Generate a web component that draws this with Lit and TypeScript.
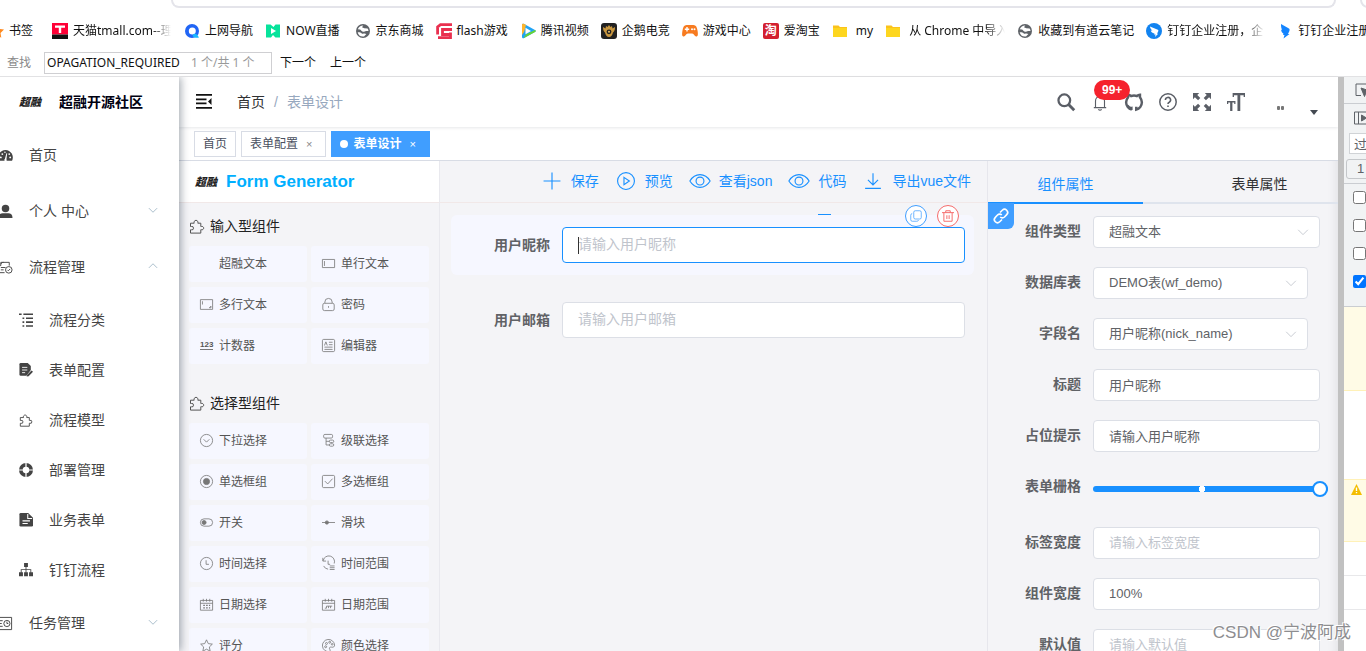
import { LitElement, html, svg, css, nothing, TemplateResult } from "lit";
import { customElement, property, state } from "lit/decorators.js";
import { classMap } from "lit/directives/class-map.js";

const solid = (body: TemplateResult, box = "0 0 16 16") =>
  html`<svg class="ico solid" viewBox=${box} aria-hidden="true">${body}</svg>`;
const line = (body: TemplateResult, box = "0 0 16 16") =>
  html`<svg class="ico line" viewBox=${box} aria-hidden="true">${body}</svg>`;

const puzzle = svg`<path d="M1.500 5.200h3.700a2 2 0 1 1 3.600 0h3v3.300h.6a1.700 1.700 0 1 1 0 3.200h-.6v3.400H1.500v-3.300h.9a1.700 1.700 0 1 0 0-3.300h-.9z"/>`;

const globe = solid(svg`
  <circle cx="8" cy="8" r="7" fill="#5f6368"/>
  <path fill="#fff" d="M2.800 6.300C3.600 3.800 5.700 2.500 8.300 2.500L7 4.300l2.300.9 3.300.4c.6.8.9 1.600.9 2.400H11c-1.200.7-2.400 1-3.600.5C6.300 8 6 6.800 4.800 6.500zM2.700 9.200c1.600-.2 3 .1 3.800 1 .8.800 1.900.6 2.900.4l2 .300-2.400 2.500C5.800 14 3.200 12.200 2.700 9.200z"/>`);
const folder = solid(svg`<path fill="#fbc21c" d="M1 2.500h5.500L8 4h7v3H1z"/><path fill="#fdd61f" d="M1 5h14v9H1z"/>`);

interface Bookmark { icon: TemplateResult; text: string; cls?: string; }
const BOOKMARKS: Bookmark[] = [
  { icon: solid(svg`<path fill="#ff0036" d="M0 0h16v11.500H0z"/><path fill="#111" d="M0 11.500h16V16H0z"/><path fill="#fff" d="M3 2.600h10v2.200H9.200V10H6.800V4.800H3z"/>`), text: "天猫tmall.com--理", cls: "fade" },
  { icon: solid(svg`<circle cx="8" cy="8" r="7" fill="#2165f5"/><circle cx="8.300" cy="8" r="3.500" fill="#fff"/><path fill="#19b8ff" d="M9.500 11c2-.8 3.300-.4 5.500 3.500-2.600.8-5 .2-6.500-1.500z"/>`), text: "上网导航" },
  { icon: solid(svg`<path fill="#07e39b" d="M1 1.500h4.500l3 2.500 2-2.500H15v13h-4.500L8 12l-2 2.500H1z"/><path fill="#fff" d="M6 5l5 3-5 3z"/>`), text: "NOW直播", cls: "wide" },
  { icon: globe, text: "京东商城" },
  { icon: solid(svg`<path fill="none" stroke="#e9304f" stroke-width="2.800" d="M16 1.600H4.500L1.600 4v7.500M16 6.500H6.500v5h8v-2M2 14.600h12.500v-4"/>`), text: "flash游戏" },
  { icon: solid(svg`<path fill="#20a4f5" d="M2 2.200C2 .8 3 .5 4.200 1L15 7c1 .6 1 1.400 0 2L4.200 15C3 15.600 2 15.200 2 13.800z"/><path fill="#ffb52b" d="M2 2.200C2 .8 3 .5 4.200 1L6 2 4 9l-2 3z"/><path fill="#6bd52e" d="M3.500 15.200L15 9c1-.6 1-1.400 0-2L6 11.500z"/><path fill="#fff" d="M5.500 4.800l5.500 3.200-5.500 3.200z"/>`), text: "腾讯视频" },
  { icon: solid(svg`<rect width="16" height="16" rx="3" fill="#222"/><path fill="#c9973f" d="M2 4l2.500 1.500L5 3l1.500 1L8 2l1.500 2L11 3l.5 2.500L14 4c0 3-.5 4-2 5.500-.5 2.500-2 4.500-4 4.500s-3.500-2-4-4.500C2.500 8 2 7 2 4z"/><circle cx="8" cy="8.800" r="2.400" fill="#222"/><circle cx="8" cy="8.800" r="1" fill="#e8bf6d"/>`), text: "企鹅电竞" },
  { icon: solid(svg`<path fill="#f77b20" d="M4.500 2h7C14 2 15 4 15.600 8c.5 3.300.5 5.500-1.400 5.500-1.700 0-2.200-3-4-3H5.800c-1.800 0-2.300 3-4 3C-.100 13.500-.100 11.300.400 8 1 4 2 2 4.500 2z"/><path fill="#fff" d="M4.300 4h1.400v1.500h1.500v1.400H5.700v1.500H4.300V6.900H2.800V5.500h1.500z"/><circle cx="10" cy="6.200" r="1" fill="#fff"/><circle cx="12.500" cy="6.200" r="1" fill="#fff"/>`), text: "游戏中心" },
  { icon: html`<span class="tao">淘</span>`, text: "爱淘宝" },
  { icon: folder, text: "my", cls: "folder" },
  { icon: folder, text: "从 Chrome 中导入", cls: "folder fade" },
  { icon: globe, text: "收藏到有道云笔记" },
  { icon: solid(svg`<circle cx="8" cy="8" r="8" fill="#1283f0"/><path fill="#fff" d="M4 3.500l7.800 3.300c.8.400.6 1.200.2 2l-1 2h1.200L9 14l.600-2.400H8l.500-1.200C6 10 5 8.500 4.800 7.400l1.700.2C5 6.600 4.200 5.300 4 3.500z"/>`), text: "钉钉企业注册，企", cls: "fade" },
  { icon: solid(svg`<path fill="#1384ff" d="M4 1l7.500 4.300c1.300.7 1.400 1.700.8 2.900L11 11h1.500L6.500 15.500l1-3.500H6l.5-1.200C4.800 9.500 4 8 4.200 6.500l1 .4C4.300 5.500 4 4 4 1z"/>`), text: "钉钉企业注册" },
];

const down = line(svg`<path d="M2.500 5.500L8 11l5.500-5.500"/>`);
const up = line(svg`<path d="M2.500 10.500L8 5l5.500 5.500"/>`);

interface MenuItem { label: string; icon: TemplateResult; sub?: boolean; arrow?: "up" | "down"; }
const MENU: MenuItem[] = [
  { label: "首页", icon: solid(svg`<path d="M8 2a8 8 0 0 0-7 11.500h14A8 8 0 0 0 8 2z"/><path fill="#fff" d="M7.300 11.800L9 5.500l.8.2L9 12a1.300 1.300 0 1 1-1.700-.2z"/><g fill="#fff"><circle cx="3" cy="10" r="1"/><circle cx="4.600" cy="6.500" r="1"/><circle cx="13" cy="10" r="1"/><circle cx="12" cy="6.500" r="1"/><circle cx="7.400" cy="4.500" r=".8"/></g>`) },
  { label: "个人 中心", icon: solid(svg`<circle cx="8" cy="4.800" r="4"/><path d="M.5 14.800c0-3.500 2-5 4.500-5h6c2.500 0 4.500 1.500 4.500 5z"/>`), arrow: "down" },
  { label: "流程管理", icon: line(svg`<path d="M3 6V2.500h9V6M3 6H1v7.500h6M3 8h5M3 10.500h3M3 4.500c1-2 2-2 3-2"/><circle cx="11.500" cy="10.500" r="3.500"/><path d="M10 10.500l1 1 2-2"/>`), arrow: "up" },
  { label: "流程分类", sub: true, icon: solid(svg`<path d="M0 .5h3v1.800H0zM5 .5h11v1.800H5zM4 5h2v1.800H4zM8 5h8v1.800H8zM4 9.500h2v1.800H4zM8 9.500h8v1.800H8zM4 14h2v1.800H4zM8 14h8v1.800H8z"/>`) },
  { label: "表单配置", sub: true, icon: solid(svg`<path d="M2 0h8L13.500 3.500V8L8.500 14.500H2Q.5 14.500.5 13V1.500Q.5 0 2 0z"/><path stroke="#fff" d="M3.500 5h6M3.500 8h6M3.500 11h3.500"/><path d="M14.300 8.500l1.700 1.500-5 5-2.200.5.600-2.200z"/>`) },
  { label: "流程模型", sub: true, icon: line(puzzle) },
  { label: "部署管理", sub: true, icon: solid(svg`<path fill-rule="evenodd" d="M8 0a8 8 0 1 0 0 16A8 8 0 0 0 8 0zM8 4.200a3.800 3.800 0 1 1 0 7.600 3.800 3.800 0 0 1 0-7.600z"/><path stroke="#fff" stroke-width="1.400" d="M8 0v4.500M8 11.500V16M0 8h4.500M11.500 8H16"/>`) },
  { label: "业务表单", sub: true, icon: solid(svg`<path d="M2 0h8.500L16 5.500V14q0 1.500-1.500 1.500H2Q.5 15.500.5 14V1.500Q.5 0 2 0z"/><path stroke="#fff" fill="none" stroke-width="1.200" d="M10 1v5.300h5M4 9h8.500M4 12h6"/>`) },
  { label: "钉钉流程", sub: true, icon: solid(svg`<path d="M5.800 0h4.400v4.500H5.800zM0 10.500h4.500V15H0zM5.800 10.500h4.400V15H5.800zM11.500 10.500H16V15h-4.500zM7.500 4.500h1v6h-1zM2 7h12v4h-1V8H3v3H2z"/>`) },
  { label: "任务管理", icon: line(svg`<path d="M1 1.500h13.500v13H1M1 5h4M1 8h3M1 11h4"/><circle cx="9.500" cy="8" r="3.300"/><path d="M9.500 6v2h1.500"/>`), arrow: "down" },
];

interface Widget { label: string; icon: TemplateResult | typeof nothing; }
const cal = svg`<path d="M.5 3h15v12H.5zM.5 6.500h15M4 1v3.500M12 1v3.500M8 1v3.500"/>`;
const GROUPS: { title: string; items: Widget[] }[] = [
  { title: "输入型组件", items: [
    { label: "超融文本", icon: nothing },
    { label: "单行文本", icon: line(svg`<path d="M.5 3h15v10H.5zM3 5v6"/>`) },
    { label: "多行文本", icon: line(svg`<path d="M.5 2h15v12H.5zM3 4v4M11.500 12l2-2v2z"/>`) },
    { label: "密码", icon: line(svg`<rect x="1" y="6.500" width="14" height="9" rx="2"/><path d="M3.500 6.500V5a4.500 4.500 0 0 1 9 0v1.500M8 10v2"/>`) },
    { label: "计数器", icon: html`<span class="digits">123</span>` },
    { label: "编辑器", icon: line(svg`<rect x=".5" y=".5" width="15" height="15" rx="1.500"/><path d="M3 8l1.800-4.500L6.500 8M8.500 4H13M8.500 7H13M3 10h10M3 12.800h10"/>`) },
  ] },
  { title: "选择型组件", items: [
    { label: "下拉选择", icon: line(svg`<circle cx="8" cy="8" r="7.500"/><path d="M4.500 6.500L8 10l3.500-3.500"/>`) },
    { label: "级联选择", icon: line(svg`<rect x="2" y=".5" width="11" height="4.500" rx="1.500"/><path d="M5 5v8.500h4M5 9h4"/><rect x="9" y="7.500" width="5.500" height="3" rx="1.500"/><rect x="9" y="12" width="5.500" height="3" rx="1.500"/>`) },
    { label: "单选框组", icon: line(svg`<circle cx="8" cy="8" r="7.500"/><circle cx="8" cy="8" r="3.800" fill="currentColor"/>`) },
    { label: "多选框组", icon: line(svg`<rect x=".5" y=".5" width="15" height="15" rx="1.500"/><path d="M3.500 7.500l3.500 3.500 6-6.500"/>`) },
    { label: "开关", icon: line(svg`<rect x=".5" y="3.500" width="15" height="9" rx="4.500"/><circle cx="5" cy="8" r="2.500" fill="currentColor"/>`) },
    { label: "滑块", icon: line(svg`<path d="M0 8h16"/><circle cx="6" cy="8" r="2" fill="currentColor"/>`) },
    { label: "时间选择", icon: line(svg`<circle cx="8" cy="8" r="7.500"/><path d="M7.500 4v5H11"/>`) },
    { label: "时间范围", icon: line(svg`<path d="M1 1v4h4M1.500 4.500A7 7 0 1 1 15 8M2 11a7 7 0 0 0 5.500 4M7.500 4.500V9H10M9.500 11h6M9.500 13.200h6M9.500 15.400h6"/>`) },
    { label: "日期选择", icon: line(svg`${cal}<path stroke-width="1.500" stroke-dasharray="2 1.500" d="M4 9.200h8.500M4 12.200h8.500"/>`) },
    { label: "日期范围", icon: line(svg`${cal}<path d="M3.500 12.500h2V10h7M8 12.500V10M10.500 12.500V10"/>`) },
    { label: "评分", icon: line(svg`<path d="M8 1l2.200 4.700 5 .6-3.700 3.500 1 5.200L8 12.500 3.500 15l1-5.200L.8 6.300l5-.6z"/>`) },
    { label: "颜色选择", icon: line(svg`<path d="M9 15.500a7.500 7.500 0 1 1 6.500-8c0 2-1.500 3-3.500 2.500-2.500-.5-3.500 1-2.500 2.500.8 1.200.8 2.500-.5 3z"/><circle cx="4.500" cy="9.500" r="1.200"/><circle cx="5.500" cy="5.500" r="1.200"/><circle cx="9.500" cy="4" r="1.200"/><circle cx="12.500" cy="6.500" r="1"/>`) },
  ] },
];

const eye = line(svg`<path d="M-1 8c4.500-7.500 13.500-7.500 18 0-4.500 7.500-13.500 7.500-18 0z"/><circle cx="8" cy="8" r="3.500"/>`);
const ACTIONS: Widget[] = [
  { label: "保存", icon: line(svg`<path d="M8 .5v15M.5 8h15"/>`) },
  { label: "预览", icon: line(svg`<circle cx="8" cy="8" r="7.500"/><path d="M6.200 4.800L11 8l-4.800 3.200z"/>`) },
  { label: "查看json", icon: eye },
  { label: "代码", icon: eye },
  { label: "导出vue文件", icon: line(svg`<path d="M8 1v10.500M3.500 7L8 11.500 12.500 7M1 14.500h14"/>`) },
];

interface Prop { label: string; kind: "select" | "text" | "slider"; value?: string; hint?: string; short?: boolean; }
const PROPS: Prop[] = [
  { label: "组件类型", kind: "select", value: "超融文本" },
  { label: "数据库表", kind: "select", value: "DEMO表(wf_demo)", short: true },
  { label: "字段名", kind: "select", value: "用户昵称(nick_name)", short: true },
  { label: "标题", kind: "text", value: "用户昵称" },
  { label: "占位提示", kind: "text", value: "请输入用户昵称" },
  { label: "表单栅格", kind: "slider" },
  { label: "标签宽度", kind: "text", hint: "请输入标签宽度" },
  { label: "组件宽度", kind: "text", value: "100%" },
  { label: "默认值", kind: "text", hint: "请输入默认值" },
];

const base = css`
  * { box-sizing: border-box; }
  button, input, select { font: inherit; color: inherit; margin: 0; }
  button { border: 0; padding: 0; background: none; text-align: left; cursor: pointer; }
  a { color: inherit; text-decoration: none; }
  .ico { width: 16px; height: 16px; flex: none; overflow: visible; display: block; }
  .solid { fill: currentColor; }
  .line { fill: none; stroke: currentColor; }
  .brush { font: italic 900 11px/16px "Noto Serif", "Noto Sans CJK SC", sans-serif; color: #222; flex: none; }
`;

@customElement("browser-bars")
export class BrowserBars extends LitElement {
  static styles = [base, css`
    :host { display: block; flex: none; background: #fff; border-bottom: 1px solid #e2e2e4; color: #111; font: 12px/16px "Noto Sans", "Noto Sans CJK SC", sans-serif; }
    .omni { display: flex; height: 8px; gap: 24px; padding-left: 171px; overflow: hidden; }
    .pill { flex: 1; border: 2px solid #e4e4ea; border-top: 0; border-radius: 0 0 8px 8px; }
    .pill.cut { flex: none; width: 30px; margin-right: -24px; }
    .marks { display: flex; align-items: center; height: 44px; padding-top: 2px; gap: 12px; overflow: hidden; white-space: nowrap; }
    .mark { display: flex; align-items: center; gap: 5px; flex: none; }
    .mark.folder { gap: 8px; }
    .mark.wide { padding-right: 3px; }
    .fade span:last-child { width: 98px; overflow: hidden; -webkit-mask-image: linear-gradient(90deg, #000 80%, transparent); }
    .folder.fade span:last-child { width: 96px; }
    .first { margin-left: -11px; gap: 4px; }
    .bar { width: 1px; height: 12px; background: #c8ccd8; margin: 0 -4px 0 -2px; }
    .bar + .mark { padding: 0 1px; }
    .tao { width: 16px; height: 16px; border-radius: 2px; background: #d3202f; color: #fff; font-weight: 700; line-height: 16px; text-align: center; }
    .find { display: flex; align-items: center; height: 24px; padding: 0 0 2px 7px; color: #8a8a8a; }
    .box { display: flex; align-items: center; width: 228px; height: 22px; margin: 0 8px 0 13px; border: 1px solid #cfcfd2; padding: 0 2px; }
    .box input { width: 144px; border: 0; padding: 0; outline: 0; color: #111; background: none; }
    .count { color: #999; white-space: nowrap; }
    .find button { color: #111; margin-right: 14px; }
  `];
  render() {
    return html`
      <div class="omni"><div class="pill"></div><div class="pill cut"></div></div>
      <nav class="marks" aria-label="书签">
        <a class="mark first" href="#">${solid(svg`<path fill="#ff8a1f" d="M8 1.500l2.200 4.300 4.800.7-3.500 3.400.8 4.800L8 12.500l-4.300 2.200.8-4.800L1 6.500l4.800-.7z"/>`)}<span>书签</span></a>
        <span class="bar"></span>
        ${BOOKMARKS.map((b) => html`<a class="mark ${b.cls ?? ""}" href="#">${b.icon}<span>${b.text}</span></a>`)}
      </nav>
      <div class="find">
        <label for="find">查找</label>
        <div class="box"><input id="find" value="OPAGATION_REQUIRED" /><span class="count">1 个/共 1 个</span></div>
        <button>下一个</button><button>上一个</button>
      </div>`;
  }
}

@customElement("side-menu")
export class SideMenu extends LitElement {
  static styles = [base, css`
    :host { display: flex; flex-direction: column; flex: none; width: 179px; background: #fff; color: #444; box-shadow: 2px 0 8px rgba(0, 21, 41, .35); z-index: 2; font-size: 14px; overflow: hidden auto; clip-path: inset(0 -12px 0 0); scrollbar-width: none; }
    .brand { display: flex; align-items: center; flex: none; gap: 18px; height: 50px; padding-left: 19px; color: #001; font-weight: 700; white-space: nowrap; }
    .item { display: flex; align-items: center; flex: none; gap: 16px; height: 56px; width: 100%; padding: 0 20px 0 0; }
    .item > .ico:first-child { width: 15px; height: 15px; margin-left: -2px; }
    .item.sub { height: 50px; padding-left: 19px; }
    .item.sub > .ico:first-child { width: 14px; height: 14px; margin-left: 0; }
    .label { flex: 1; }
    .arrow { color: #8fa9bb; margin-top: -2px; }
    .arrow .ico { width: 12px; height: 12px; }
  `];
  render() {
    return html`
      <div class="brand"><span class="brush">超融</span>超融开源社区</div>
      ${MENU.map((m) => html`<button class=${classMap({ item: true, sub: !!m.sub })}>
        ${m.icon}<span class="label">${m.label}</span>
        ${m.arrow ? html`<span class="arrow">${m.arrow === "up" ? up : down}</span>` : nothing}
      </button>`)}`;
  }
}

@customElement("page-header")
export class PageHeader extends LitElement {
  static styles = [base, css`
    :host { display: block; flex: none; background: #fff; font-size: 14px; }
    .top { display: flex; align-items: center; height: 50px; padding: 0 20px 0 17px; box-shadow: 0 1px 3px rgba(0, 21, 41, .1); }
    .fold { color: #111; margin-right: 25px; }
    .crumbs { display: flex; gap: 9px; flex: 1; color: #303133; }
    .crumbs span { color: #97a8be; }
    .tools { display: flex; align-items: center; gap: 16px; color: #5a5e66; }
    .tools .ico { width: 18px; height: 18px; }
    .bell { position: relative; }
    .badge { position: absolute; left: 3px; top: -13px; z-index: 1; height: 20px; padding: 0 8px; border-radius: 10px; background: #f5222d; color: #fff; font: 700 12px/20px "Liberation Sans", sans-serif; }
    .user { display: flex; align-items: flex-end; gap: 26px; height: 22px; padding-left: 16px; }
    .dots { display: flex; gap: 1px; padding-bottom: 3px; }
    .dots i { width: 3px; height: 4px; border-radius: 1px; background: #777; }
    .caret { border: 4px solid transparent; border-top: 5px solid #444a52; border-bottom: 0; margin-bottom: -2px; }
    .tags { display: flex; align-items: center; gap: 5px; height: 34px; padding-left: 15px; border-bottom: 1px solid #d8dce5; }
    .tag { display: flex; align-items: center; height: 26px; padding: 0 8px; border: 1px solid #d8dce5; color: #495060; font-size: 12px; background: #fff; }
    .tag b { font-weight: 400; font-size: 11px; padding: 0 5px 0 8px; color: #888; }
    .tag.on { background: #409eff; border-color: #409eff; color: #fff; font-weight: 700; }
    .tag.on b { color: #fff; }
    .tag.on::before { content: ""; width: 8px; height: 8px; border-radius: 50%; background: #fff; margin-right: 5px; }
  `];
  render() {
    return html`
      <div class="top">
        <button class="fold" aria-label="折叠">${solid(svg`<path d="M0 0h16v1.800H0zM0 4.500h10.500v1.800H0zM0 8.500h10.500v1.800H0zM0 13h16v1.800H0zM15.500 4v7L12 7.500z"/>`)}</button>
        <div class="crumbs"><a href="#">首页</a><span>/</span><span>表单设计</span></div>
        <div class="tools">
          <button aria-label="搜索">${line(svg`<circle cx="6.500" cy="6.500" r="5.200" stroke-width="2"/><path stroke-width="2.600" d="M10.300 10.300l5 5"/>`)}</button>
          <button class="bell" aria-label="通知">${line(svg`<path d="M2.500 13h11M4 13V7a4 4 0 0 1 8 0v6M6.500 14.500q1.500 1.500 3 0M8 3V1.500"/>`)}<span class="badge">99+</span></button>
          <button aria-label="GitHub">${line(svg`<path stroke-width="2.200" d="M6 14.800c-2.800-.800-5-3.500-5-6.500C1 6.500 1.800 5 2.700 3.800V1.500c1 0 2 .5 2.800 1.200 1.600-.5 3.400-.5 5 0 .8-.700 1.800-1.200 2.800-1.200v2.300C14.200 5 15 6.500 15 8.300c0 3-2.200 5.700-5 6.500v-2.500"/><path stroke-width="1.500" d="M6 15v-2c-2 .4-2.500-.8-3.500-2"/>`)}</button>
          <button aria-label="帮助">${line(svg`<circle cx="8" cy="8" r="7.300" stroke-width="1.300"/><path stroke-width="1.400" d="M5.700 6.200a2.300 2.300 0 1 1 3.400 2c-.8.400-1.100.8-1.100 1.600M8 11v1.500"/>`)}</button>
          <button aria-label="全屏">${solid(svg`<path d="M0 0h5.500L3.800 1.700l2.700 2.700-2 2-2.800-2.700L0 5.500zM16 0v5.500l-1.700-1.800-2.800 2.700-2-2 2.700-2.700L10.500 0zM0 16v-5.500l1.700 1.800 2.800-2.700 2 2-2.700 2.700L5.500 16zM16 16h-5.500l1.700-1.700-2.700-2.700 2-2 2.800 2.700 1.700-1.800z"/>`)}</button>
          <button aria-label="字号">${solid(svg`<path d="M5 0h11v3.500h-1.200V2h-3v14H9.300V2H6.200v1.500H5zM0 7h7.500v2.800H6.400V8.500H4.800V16H2.800V8.500H1.100v1.300H0z"/>`)}</button>
          <button class="user" aria-label="用户"><span class="dots"><i></i><i></i></span><span class="caret"></span></button>
        </div>
      </div>
      <div class="tags">
        <a class="tag" href="#">首页</a>
        <a class="tag" href="#">表单配置<b>×</b></a>
        <a class="tag on" href="#">表单设计<b>×</b></a>
      </div>`;
  }
}

@customElement("form-designer")
export class FormDesigner extends LitElement {
  @property({ type: Number }) span = 24;
  @state() private tab = 0;
  static styles = [base, css`
    :host { display: grid; grid-template-columns: 261px minmax(0, 1fr) 351px; flex: 1; min-height: 0; background: #f4f4f7; color: #606266; font-size: 14px; overflow: hidden; }
    .col { display: flex; flex-direction: column; min-height: 0; overflow: hidden; }
    .head { display: flex; align-items: center; flex: none; height: 42px; border-bottom: 1px solid #f1e8e8; }
    .left { border-right: 1px solid #e9e9ee; }
    .left .head { background: #fff; gap: 9px; padding-left: 16px; color: #00afff; font: 700 17px/20px "Liberation Sans", sans-serif; }
    .group { padding: 11px 10px 0; }
    .group + .group { padding-top: 27px; }
    h3 { display: flex; align-items: center; gap: 5px; margin: 0 0 8px; font-size: 14px; font-weight: 400; line-height: 24px; color: #222; }
    h3 .ico { color: #555; }
    .cards { display: grid; grid-template-columns: 1fr 1fr; gap: 5px 4px; }
    .card { display: flex; align-items: center; gap: 6px; height: 36px; padding-left: 11px; border-radius: 3px; background: #f6f7ff; font-size: 12px; color: #555; }
    .slot { display: flex; width: 13px; padding-bottom: 2px; color: #777; }
    .slot .ico { width: 13px; height: 13px; }
    .digits { font: 700 8px/9px "Liberation Sans", sans-serif; border-bottom: 1px solid #777; color: #555; }
    .mid .head { justify-content: flex-end; gap: 18px; padding: 0 16px 2px 0; }
    .act { display: flex; align-items: center; gap: 10px; color: #1890ff; white-space: nowrap; }
    .act .ico { width: 18px; height: 18px; }
    .canvas { display: flex; flex-direction: column; gap: 15px; padding: 12px 13px 0 11px; }
    .field { position: relative; display: flex; align-items: center; gap: 12px; height: 60px; padding: 0 9px 0 12px; border-radius: 6px; }
    .field.on { background: #f6f7ff; }
    .field label { width: 87px; text-align: right; font-weight: 700; }
    .entry { position: relative; flex: 1; display: flex; }
    .in { width: 100%; min-width: 0; height: 36px; padding: 0 15px; border: 1px solid #dcdfe6; border-radius: 4px; background: #fff; outline: 0; color: #606266; }
    .in::placeholder { color: #c0c4cc; opacity: 1; }
    .on .in { border-color: #1890ff; }
    .cursor { position: absolute; left: 16px; top: 10px; width: 1px; height: 17px; background: #333; }
    .grip { position: absolute; right: 143px; top: -1px; width: 13px; height: 1px; background: #1890ff; }
    .round { position: absolute; top: -10px; display: grid; place-items: center; width: 22px; height: 22px; border: 1px solid; border-radius: 50%; background: #fff; }
    .round .ico { width: 12px; height: 12px; }
    .copy { right: 47px; color: #409eff; }
    .del { right: 15px; color: #f56c6c; }
    .right { position: relative; border-left: 1px solid #e6e6ec; box-shadow: inset -10px 0 10px -8px rgba(0, 0, 0, .08); }
    .tabs { display: flex; flex: none; height: 43px; padding-top: 5px; border-bottom: 2px solid #dfe4ed; color: #303133; }
    .tabs button { flex: none; width: 155px; text-align: center; border-bottom: 2px solid transparent; margin-bottom: -2px; }
    .tabs button + button { flex: 1; padding-left: 38px; }
    .tabs button.cur { color: #1890ff; border-color: #1890ff; }
    .pin { position: absolute; left: 0; top: 42px; display: grid; place-items: center; width: 26px; height: 26px; background: #409eff; color: #fff; border-radius: 0 0 6px 0; }
    .props { display: flex; flex-direction: column; gap: 19px; padding: 12px 18px 0 0; }
    .row { display: flex; gap: 12px; font-size: 13px; }
    .row label { width: 93px; text-align: right; font-size: 14px; font-weight: 700; line-height: 30px; }
    .ctl { position: relative; flex: 1; display: flex; align-items: center; min-width: 0; }
    .ctl .in { height: 32px; }
    input.in { padding-bottom: 2px; }
    .ctl.short { padding-right: 12px; }
    select.in { appearance: none; }
    .ctl > .ico { position: absolute; right: 10px; width: 14px; height: 14px; color: #c0c4cc; }
    .ctl.short > .ico { right: 22px; }
    .ctl.range { height: 37px; margin-right: -8px; padding-bottom: 2px; }
    .slider { appearance: none; width: 100%; height: 16px; background: none; }
    .slider::-webkit-slider-runnable-track { height: 6px; border-radius: 3px; background: radial-gradient(circle at 109px 3px, #fff 3px, #1890ff 3px); }
    .slider::-webkit-slider-thumb { appearance: none; width: 16px; height: 16px; margin-top: -5px; border: 2px solid #1890ff; border-radius: 50%; background: #fff; box-shadow: none; }
  `];
  private field(p: Prop, i: number) {
    const id = `p${i}`;
    if (p.kind === "slider")
      return html`<div class="ctl range"><input id=${id} class="slider" type="range" min="0" max="24" .value=${String(this.span)} /></div>`;
    if (p.kind === "select")
      return html`<div class=${classMap({ ctl: true, short: !!p.short })}><select id=${id} class="in"><option>${p.value}</option></select>${down}</div>`;
    return html`<div class="ctl"><input id=${id} class="in" .value=${p.value ?? ""} placeholder=${p.hint ?? ""} /></div>`;
  }
  render() {
    return html`
      <section class="col left">
        <div class="head"><span class="brush">超融</span>Form Generator</div>
        ${GROUPS.map((g) => html`<div class="group">
          <h3>${line(puzzle)}${g.title}</h3>
          <div class="cards">${g.items.map((w) => html`<button class="card"><span class="slot">${w.icon}</span>${w.label}</button>`)}</div>
        </div>`)}
      </section>
      <section class="col mid">
        <div class="head">${ACTIONS.map((a) => html`<button class="act">${a.icon}${a.label}</button>`)}</div>
        <div class="canvas">
          <div class="field on">
            <label for="nick">用户昵称</label>
            <div class="entry"><input class="in" id="nick" placeholder="请输入用户昵称" /><span class="cursor"></span></div>
            <span class="grip"></span>
            <button class="round copy" aria-label="复制">${line(svg`<rect x="5" y="1" width="10" height="11" rx="2"/><path d="M3 4.500Q1 5 1 7v6q0 2 2 2h6q2 0 2.500-1.500"/>`)}</button>
            <button class="round del" aria-label="删除">${line(svg`<path stroke-width="1.300" d="M0 3.500h16M5 3.500V1h6v2.500M2.500 3.500V15h11V3.500M6.500 7v5M9.500 7v5"/>`)}</button>
          </div>
          <div class="field">
            <label for="mail">用户邮箱</label>
            <div class="entry"><input class="in" id="mail" placeholder="请输入用户邮箱" /></div>
          </div>
        </div>
      </section>
      <section class="col right">
        <div class="tabs">
          ${["组件属性", "表单属性"].map((t, i) => html`<button class=${classMap({ cur: this.tab === i })} @click=${() => (this.tab = i)}>${t}</button>`)}
        </div>
        <a class="pin" href="#" aria-label="链接">${line(svg`<path stroke-width="1.600" d="M7 4.500l2.300-2.300a3 3 0 0 1 4.400 4.400L11.500 9a3 3 0 0 1-4.300 0M9 11.500l-2.300 2.300a3 3 0 0 1-4.400-4.400L4.500 7a3 3 0 0 1 4.300 0"/>`)}</a>
        <div class="props">${PROPS.map((p, i) => html`<div class="row"><label for=${`p${i}`}>${p.label}</label>${this.field(p, i)}</div>`)}</div>
      </section>`;
  }
}

@customElement("dev-strip")
export class DevStrip extends LitElement {
  static styles = [base, css`
    :host { box-sizing: border-box; display: flex; flex-direction: column; flex: none; width: 28px; border-left: 6px solid #c1c1c1; background: #fff; overflow: hidden; font-size: 13px; color: #5f6368; }
    .panel { flex: none; background: #f1f3f4; border-bottom: 1px solid #cacdd1; }
    .tool { display: flex; align-items: center; height: 27px; padding-left: 10px; border-bottom: 1px solid #cacdd1; }
    .play { height: 28px; border: 0; }
    .filter { display: block; width: 40px; height: 21px; margin: 1px 0 5px 5px; padding: 0 4px; border: 1px solid #d0d3d6; background: #fff; }
    .level { display: block; width: 40px; height: 20px; margin: 0 0 4px 2px; padding: 0 10px; border: 1px solid #c4c7ca; border-radius: 3px; background: #f1f3f4; }
    .checks { display: flex; flex-direction: column; gap: 15px; height: 123px; padding: 7px 0 0 9px; border-top: 1px solid #cacdd1; }
    .checks input { width: 13px; height: 13px; flex: none; }
    .note { flex: none; background: #fffbe6; border: 1px solid #fff1b8; border-width: 1px 0; }
    .n1 { height: 84px; border-top: 0; }
    .n2 { height: 63px; margin-top: 88px; padding: 4px 0 0 7px; }
    .n2 .ico { width: 11px; height: 11px; }
    .blank { flex: none; height: 34px; border-bottom: 1px solid #e8e8ea; }
  `];
  render() {
    return html`
      <div class="panel">
        <div class="tool">${line(svg`<path d="M7 13.500H2V2h14"/><path fill="currentColor" d="M7 6l9 3-4 1.500-1.500 4z"/>`)}</div>
        <div class="tool play">${line(svg`<path d="M.5 2h15.500M.5 2v12h15.500M4.500 2v12"/><path fill="currentColor" d="M7.500 5l5 3-5 3z"/>`)}</div>
        <input class="filter" aria-label="过滤" value="过" />
        <input class="level" aria-label="级别" value="1" />
        <div class="checks">${[0, 0, 0, 1].map((c, i) => html`<input type="checkbox" aria-label=${`选项${i + 1}`} .checked=${!!c} />`)}</div>
      </div>
      <div class="note n1"></div>
      <div class="note n2">${solid(svg`<path fill="#f4bd00" d="M8 0l8 16H0z"/><path fill="#fff" d="M7 5h2v5H7zM7 11.500h2v2H7z"/>`)}</div>
      <div class="blank"></div><div class="blank"></div>`;
  }
}

@customElement("app-root")
export class AppRoot extends LitElement {
  static styles = css`
    :host { position: relative; display: flex; flex-direction: column; height: 100vh; overflow: hidden; background: #fff; font-family: "Liberation Sans", "Noto Sans CJK SC", sans-serif; font-size: 14px; line-height: 20px; }
    .body { display: flex; flex: 1; min-height: 0; }
    .page { display: flex; flex-direction: column; flex: 1; min-width: 0; }
    .mark { position: absolute; right: 15px; bottom: 8px; z-index: 5; font-size: 17px; color: #8d8d90; text-shadow: 1px 1px 0 #fff, -1px -1px 0 #fff; white-space: nowrap; }
  `;
  render() {
    return html`
      <browser-bars></browser-bars>
      <div class="body">
        <side-menu></side-menu>
        <div class="page"><page-header></page-header><form-designer></form-designer></div>
        <dev-strip></dev-strip>
      </div>
      <div class="mark">CSDN @宁波阿成</div>`;
  }
}
